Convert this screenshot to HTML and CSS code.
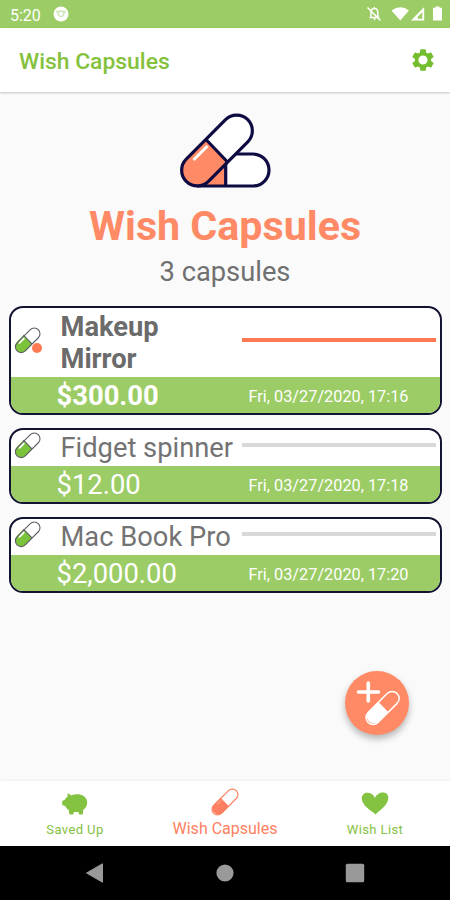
FILE: index.html
```html
<!DOCTYPE html>
<html lang="en">
<head>
<meta charset="utf-8">
<title>Wish Capsules</title>
<link rel="stylesheet" href="styles.css">
</head>
<body>
<svg class="defs" aria-hidden="true">
  <symbol id="pill" viewBox="0 0 28 28">
    <path d="M4.2 14.2 15.3 3.2a5.6 5.6 0 0 1 8 8L12.200 22.300z" fill="#fff"/>
    <path d="M9.400 8.200 3 14.800a6.200 6.200 0 0 0 9 9l6.200-6.800z" fill="#7cc33c"/>
    <path d="M5.500 15.800 9.800 11.500" stroke="#fff" stroke-width="1.800" stroke-linecap="round"/>
    <rect x="-4.900" y="-14.800" width="11.400" height="30" rx="5.700" transform="translate(13.300 12.600) rotate(45)" fill="none" stroke="#5c5c66" stroke-width="1.100"/>
    <path d="m9.400 8.200 8.600 8.600" stroke="#5c5c66" stroke-width="1.100"/>
  </symbol>
</svg>
<div class="screen">
  <div class="status">
    <span class="time">5:20</span>
    <svg class="chrome" viewBox="0 0 16 16"><circle cx="8" cy="8" r="7.500" fill="#fff"/><path d="M3 5.200h10M3.500 5.500l3 5M12.500 5.500 9 11.500" stroke="#c5e2ad" fill="none"/><circle cx="8" cy="7.800" r="2.600" fill="#fff" stroke="#c5e2ad"/></svg>
    <svg class="signals" viewBox="0 0 78 18">
      <path d="M3.500 12.500h9.800M5 12V7.500c0-2.500 1.200-4 3.300-4s3.500 1.500 3.500 4V12M8.300 2v2M1.500 2.500l13 13" fill="none" stroke="#fff" stroke-width="1.500"/><path d="M7 13.600h3l-1.500 1.800z" fill="#fff"/>
      <path d="M25.500 5.500Q34.500-1 43 5.500L34.300 15.500z" fill="#fff"/>
      <path d="M58.200 2v13.500H45z" fill="#fff"/><path d="M56.300 7.200v6.600h-4.600v-2z" fill="#9ccc65"/>
      <path d="M69.500 1.500h4v1.300h2.500V15.500h-9V2.800h2.500z" fill="#fff"/>
    </svg>
  </div>
  <header class="appbar">
    <h1>Wish Capsules</h1>
    <svg class="gear" viewBox="0 0 24 24"><path fill="#74bd2f" d="M19.430 12.980c.04-.32.070-.64.070-.98s-.03-.66-.07-.98l2.110-1.650c.19-.15.240-.42.120-.64l-2-3.460c-.12-.22-.39-.3-.61-.22l-2.490 1c-.52-.4-1.080-.73-1.690-.98l-.38-2.650A.49.490 0 0 0 14 2h-4c-.25 0-.46.180-.49.420l-.38 2.650c-.61.250-1.170.59-1.690.98l-2.490-1c-.23-.09-.49 0-.61.220l-2 3.460c-.13.220-.07.490.120.640l2.110 1.650c-.04.320-.07.650-.07.980s.03.660.070.980l-2.110 1.650c-.19.150-.24.420-.12.640l2 3.460c.12.220.39.300.61.220l2.490-1c.52.400 1.080.730 1.690.980l.38 2.650c.03.240.240.420.490.420h4c.25 0 .46-.18.490-.42l.38-2.650c.61-.25 1.170-.59 1.690-.98l2.490 1c.23.090.490 0 .61-.22l2-3.460c.12-.22.070-.49-.12-.64zM12 16.200a4.200 4.200 0 1 1 0-8.400 4.200 4.200 0 0 1 0 8.400z"/></svg>
  </header>
  <main>
    <svg class="hero" viewBox="178 111 94 79">
      <path d="M225.500 154H253a16 16 0 0 1 0 32h-27.500z" fill="#fff"/>
      <path d="m226 162v24h-23z" fill="#ff8a65"/>
      <path d="M235 154h18a16 16 0 0 1 0 32h-56M225.700 162v24" fill="none" stroke="#0e0b42" stroke-width="3.200"/>
      <path d="m206 139.500 19.700-19.700a15.700 15.700 0 0 1 22.300 22.200L227.500 162z" fill="#fff"/>
      <path d="m206 139.500-20 20a15.700 15.700 0 0 0 22.300 22.200L227.500 162z" fill="#ff8a65"/>
      <rect x="-15.700" y="-43.500" width="31.400" height="87" rx="15.700" transform="translate(217 150.500) rotate(45)" fill="none" stroke="#0e0b42" stroke-width="3.200"/>
      <path d="m206 139.500 21.500 22.500" stroke="#0e0b42" stroke-width="3.200"/>
      <path d="m193.500 160 14-14" stroke="#fff" stroke-width="3"/>
    </svg>
    <h2>Wish Capsules</h2>
    <p class="count">3 capsules</p>
    <div class="cards">
      <section class="card active">
        <div class="top"><svg class="pill"><use href="#pill"/></svg><i class="dot"></i><span class="name">Makeup Mirror</span><span class="bar"></span></div>
        <div class="bottom"><span class="price">$300.00</span><time>Fri, 03/27/2020, 17:16</time></div>
      </section>
      <section class="card">
        <div class="top"><svg class="pill"><use href="#pill"/></svg><span class="name">Fidget spinner</span><span class="bar"></span></div>
        <div class="bottom"><span class="price">$12.00</span><time>Fri, 03/27/2020, 17:18</time></div>
      </section>
      <section class="card">
        <div class="top"><svg class="pill"><use href="#pill"/></svg><span class="name">Mac Book Pro</span><span class="bar"></span></div>
        <div class="bottom"><span class="price">$2,000.00</span><time>Fri, 03/27/2020, 17:20</time></div>
      </section>
    </div>
    <button class="fab" aria-label="Add"><svg viewBox="0 0 64 64"><path d="M23.300 12v18M13.500 21h20" stroke="#fff" stroke-width="3.600" stroke-linecap="round"/><path d="m33.300 30.700-9.700 9.800a7.300 7.300 0 0 0 10.300 10.300l9.500-9.600z" fill="#fff"/><rect x="-7" y="-20.500" width="14" height="41" rx="7" transform="translate(37.600 37) rotate(45)" fill="none" stroke="#fff" stroke-width="1.500"/></svg></button>
  </main>
  <nav class="tabs">
    <div class="tab"><svg viewBox="0 0 28 28"><path fill="#84c241" d="M6.500 3.500c1.500.2 2.800.9 3.700 2C16 3 23.500 4.500 25.600 9.500c1.700 4.500-.4 8.300-3.300 10.300l-.6 4.700h-3.500l-.8-2.500h-4.500l-.7 2.500H8.500L7.700 20c-1.700-1-2.800-2.300-3.300-3.800L1.200 15v-4l2.600-1.200c.5-1.200 1.400-2.200 2.700-3z"/></svg><span>Saved Up</span></div>
    <div class="tab current"><svg viewBox="0 0 28 28"><path d="m9.600 9.800-6.300 6.400a6 6 0 0 0 8.500 8.500l6.200-6.500z" fill="#ff8060"/><rect x="-5.500" y="-16" width="11" height="32" rx="5.500" transform="translate(14 14) rotate(45)" fill="none" stroke="#ff8060" stroke-width="1.200"/><path d="m6 16.500 4-4" stroke="#ffc2b0" stroke-width="1"/></svg><span>Wish Capsules</span></div>
    <div class="tab"><svg viewBox="0 0 28 28"><path fill="#84c241" d="M14.500 24.500C12 21.500.8 16.500.8 8.300c0-7.300 10.500-7.500 13.200-.3C16.500.8 27.700.5 27.300 8c-.3 7.500-9 12.500-12.800 16.500z"/></svg><span>Wish List</span></div>
  </nav>
  <div class="system">
    <svg viewBox="0 0 20 20"><path d="M17.500.8v18.400L1.500 10z" fill="#999" stroke="#999" stroke-linejoin="round"/></svg>
    <svg viewBox="0 0 20 20"><circle cx="10" cy="10" r="8.600" fill="#999"/></svg>
    <svg viewBox="0 0 20 20"><rect x=".8" y=".8" width="18.400" height="18.400" rx="1.500" fill="#999"/></svg>
  </div>
</div>
</body>
</html>
```
FILE: styles.css
```css
* { box-sizing: border-box; }
body { margin: 0; font-family: Roboto, "Liberation Sans", sans-serif; }
svg { display: block; flex: none; }
.defs { display: none; }
h1, h2, p { margin: 0; }
.screen { width: 450px; height: 900px; display: flex; flex-direction: column; background: #fafafa; overflow: hidden; }
.status { height: 28px; flex: none; background: #9ccc65; color: #fff; display: flex; align-items: center; padding: 0 4px 0 10px; font-size: 16px; }
.time { width: 43px; padding-top: 2px; }
.chrome { width: 16px; height: 16px; }
.signals { width: 78px; height: 18px; margin: 0 2px 0 auto; }
.appbar { height: 64px; flex: none; background: #fff; display: flex; align-items: center; justify-content: space-between; padding: 2px 14px 0 19px; box-shadow: 0 1px 2px rgba(0,0,0,.22); }
h1 { font-size: 22.900px; font-weight: 500; color: #84c23e; }
.gear { width: 26px; height: 26px; position: relative; top: -1px; }
main { flex: 1; position: relative; display: flex; flex-direction: column; align-items: center; padding-top: 19px; }
.hero { width: 94px; height: 79px; }
h2 { margin-top: 11px; height: 50px; font-size: 41.200px; line-height: 51px; font-weight: 700; color: #ff8a65; }
.count { height: 34px; margin-top: 4px; font-size: 27.300px; line-height: 34px; color: #707070; }
.cards { width: 433px; margin-top: 17px; display: grid; gap: 13px; }
.card { height: 76px; border: 2px solid #111331; border-radius: 14px; overflow: hidden; display: flex; flex-direction: column; background: #fff; }
.active { height: 109px; }
.top { flex: 1; display: grid; grid-template-columns: 50px 181px 194px; align-items: center; position: relative; }
.pill { width: 28px; height: 28px; margin: 0 0 4px 3px; }
.dot { position: absolute; left: 21px; top: 35px; width: 10px; height: 10px; border-radius: 50%; background: #ff7a52; }
.name { font-size: 27.300px; line-height: 32px; color: #737373; white-space: nowrap; }
.active .name { font-weight: 700; white-space: normal; width: 150px; color: #6b6b6b; }
.bar { height: 4px; background: #d8d8d8; margin-bottom: 6px; }
.active .bar { background: #ff7a52; margin-bottom: 5px; }
.bottom { height: 36px; flex: none; background: #9ccc65; color: #fff; display: flex; align-items: center; justify-content: space-between; padding: 2px 31px 0 46px; }
.price { font-size: 27.400px; }
.active .price { font-weight: 700; }
time { font-size: 16.300px; }
.fab { position: absolute; left: 345px; top: 579px; width: 64px; height: 64px; padding: 0; border: 0; border-radius: 50%; background: #ff8a65; box-shadow: 0 4px 7px rgba(0,0,0,.28); }
.tabs { height: 65px; flex: none; display: grid; grid-template-columns: repeat(3, 1fr); background: #fff; box-shadow: 0 -1px 2px rgba(0,0,0,.05); }
.tab { display: flex; flex-direction: column; align-items: center; padding-top: 9px; font-size: 13px; letter-spacing: .4px; color: #84c241; }
.tab svg { width: 28px; height: 28px; }
.tab span { margin-top: 4px; line-height: 16px; }
.current { padding-top: 7px; font-size: 16px; letter-spacing: 0; color: #ff8060; }
.current span { margin-top: 5px; }
.system { height: 54px; flex: none; background: #000; display: flex; justify-content: space-between; align-items: center; padding: 0 85px; }
.system svg { width: 20px; height: 20px; }
```
